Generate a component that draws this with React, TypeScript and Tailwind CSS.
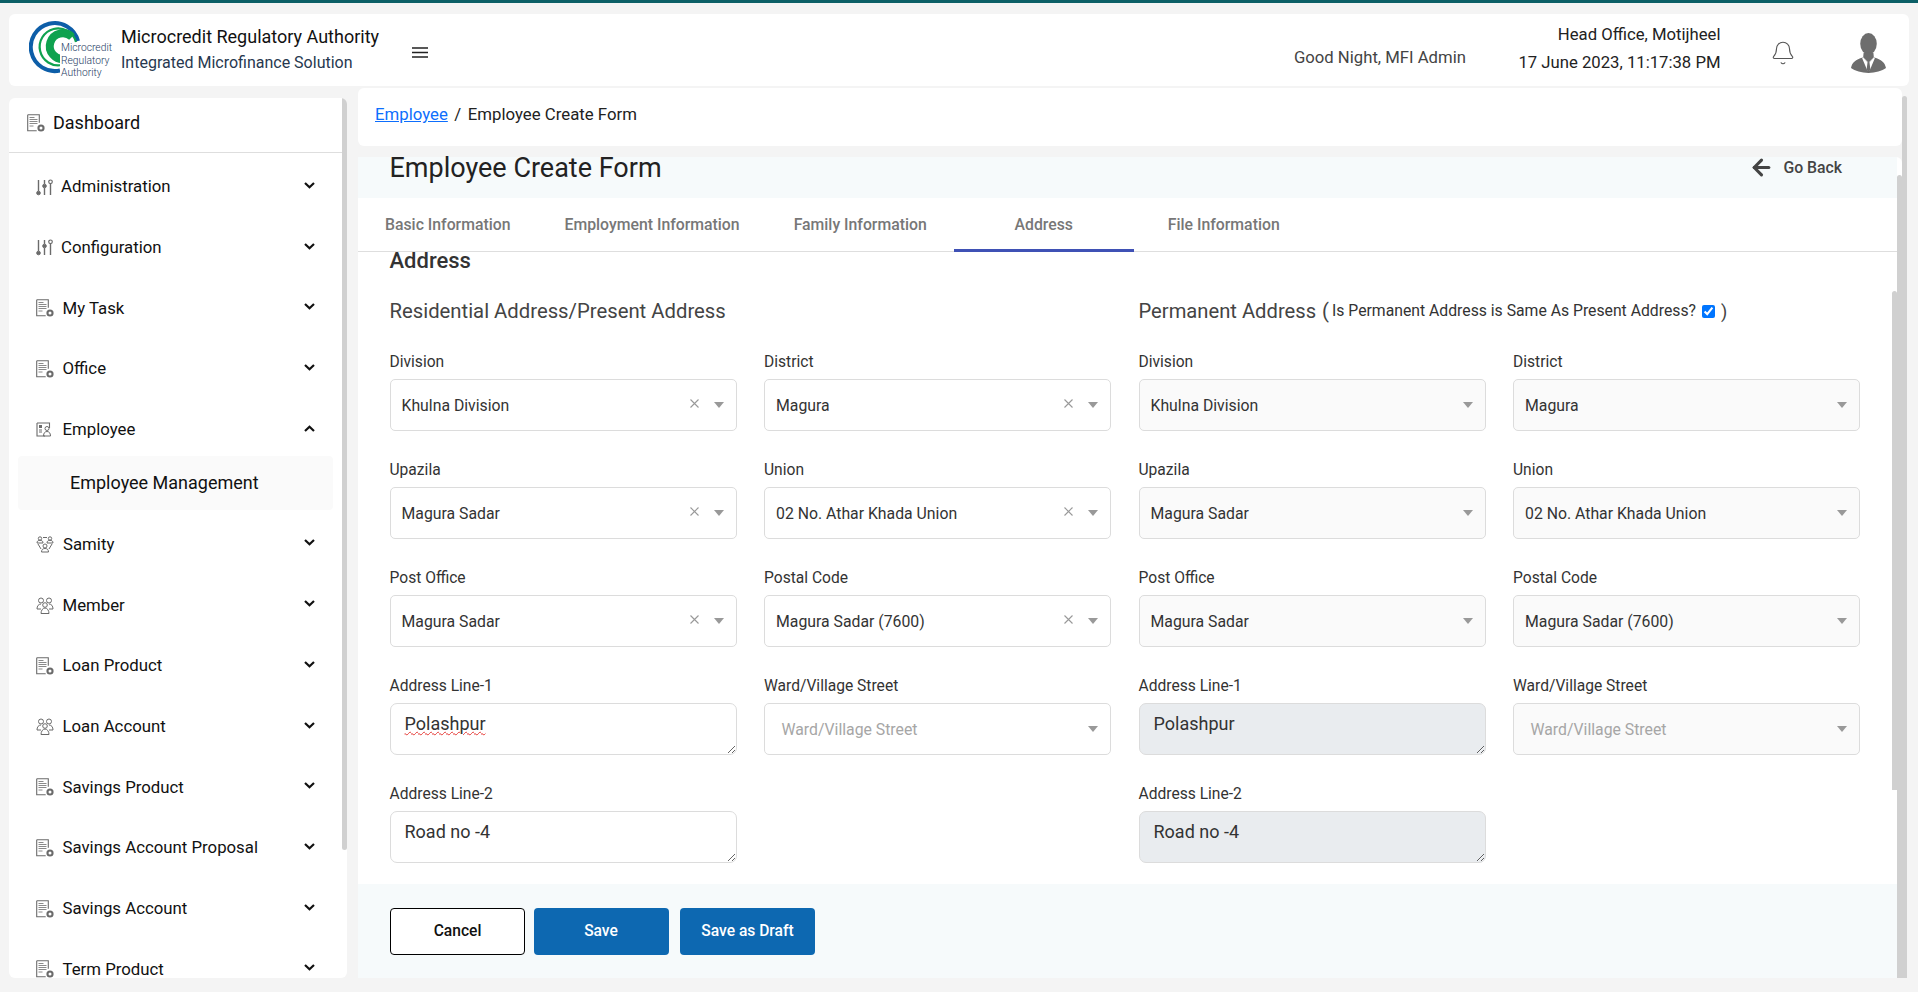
import React from "react";
import { Bell, ArrowLeft } from "lucide-react";

type IconKind = "doc" | "sliders" | "emp" | "samity" | "member";

function MenuIcon({ kind }: { kind: IconKind }) {
  const s = { stroke: "#6b6b6b", strokeWidth: 1, fill: "none" };
  if (kind === "sliders")
    return (
      <svg width="17" height="17" viewBox="0 0 17 17" {...s}>
        <path d="M2.5 1v11M8.5 1v4M8.5 9v7M14.5 5v11" strokeWidth="1.4" />
        <circle cx="2.5" cy="14" r="1.8" fill="#6b6b6b" />
        <circle cx="8.5" cy="7" r="1.8" fill="#6b6b6b" />
        <circle cx="14.5" cy="2.8" r="1.8" fill="#fff" strokeWidth="1.2" />
      </svg>
    );
  if (kind === "emp")
    return (
      <svg width="16" height="15" viewBox="0 0 16 15" {...s}>
        <path d="M1 1h12.5v5M1 1v13h8" strokeWidth="1.1" />
        <rect x="3" y="3" width="3" height="3" fill="#6b6b6b" stroke="none" />
        <path d="M3 8h3M3 10h3" />
        <circle cx="11" cy="6.5" r="2" />
        <path d="M7.5 14c0-3 1.5-4.5 3.5-4.5s3.5 1.5 3.5 4.5z" />
      </svg>
    );
  if (kind === "samity")
    return (
      <svg width="18" height="17" viewBox="0 0 18 17" {...s}>
        <circle cx="4" cy="2.5" r="1.7" />
        <circle cx="14" cy="2.5" r="1.7" />
        <circle cx="9" cy="10" r="2" />
        <path d="M1 7c0-2 1.3-2.7 3-2.7S7 5 7 7zM11 7c0-2 1.3-2.7 3-2.7S17 5 17 7zM5.5 16c0-2.5 1.5-3.5 3.5-3.5s3.5 1 3.5 3.5zM7 1.5h4M2 8l3 5M16 8l-3 5" />
      </svg>
    );
  if (kind === "member")
    return (
      <svg width="18" height="17" viewBox="0 0 18 17" {...s}>
        <circle cx="5" cy="3.5" r="2.5" />
        <circle cx="13" cy="3.5" r="2.5" />
        <circle cx="9" cy="8" r="2.3" />
        <path d="M1 12c0-3 1.5-5 4-5M17 12c0-3-1.5-5-4-5M1 12h4M13 12h4M5 16.5c0-3 1.7-5.5 4-5.5s4 2.500 4 5.500z" />
      </svg>
    );
  return (
    <svg width="18" height="18" viewBox="0 0 18 18" {...s}>
      <path d="M.7.7h11.6v8M.7.7v16h9" strokeWidth="1.1" />
      <path d="M2.500 3.500h5M2.500 5.500h8M2.500 7.500h8M2.500 9.500h8M2.500 12h4" stroke="#8a8a8a" />
      <circle cx="14" cy="14" r="3.600" fill="#6b6b6b" stroke="none" />
      <circle cx="14" cy="14" r="1.500" fill="#fff" stroke="none" />
    </svg>
  );
}

function Chevron({ up }: { up?: boolean }) {
  return (
    <svg className="-mt-[3px]" width="11" height="7" viewBox="0 0 11 7" fill="none" stroke="#111" strokeWidth="2.2">
      <path d={up ? "M1 6l4.500-4.300L10 6" : "M1 1l4.500 4.300L10 1"} />
    </svg>
  );
}

function Caret() {
  return (
    <svg width="10" height="6" viewBox="0 0 10 6" fill="#999">
      <path d="M0 0h10L5 6z" />
    </svg>
  );
}

function Clear() {
  return (
    <svg width="9" height="9" viewBox="0 0 9 9" fill="none" stroke="#999" strokeWidth="1.1">
      <path d="M.5.5l8 8M8.500.5l-8 8" />
    </svg>
  );
}

function Logo() {
  return (
    <div className="relative w-[82px] h-[58px] shrink-0">
      <svg width="82" height="58" viewBox="0 0 82 58" fill="none">
        <path d="M49 20A24 24 0 1 0 31 49.500" stroke="#0d5ea8" strokeWidth="4" />
        <path d="M47 21A18.500 18.500 0 1 0 33 44" stroke="#0fa24f" strokeWidth="2.200" />
        <path d="M43 16A13 13 0 1 0 36 38" stroke="#0fa24f" strokeWidth="8" />
        <rect x="31" y="23" width="51" height="35" fill="#fff" />
      </svg>
      <div className="absolute left-[32px] top-[21px] text-[10.300px] leading-[12.600px] font-light text-[#1d3b63]">
        <div>Microcredit</div>
        <div>Regulatory</div>
        <div>Authority</div>
      </div>
    </div>
  );
}

function Avatar() {
  return (
    <svg width="35" height="40" viewBox="0 0 36 41">
      <ellipse cx="18" cy="11" rx="8.500" ry="11" fill="#6d6d6d" />
      <path d="M13 20h10l.5 5-5.500 5-5.500-5z" fill="#6d6d6d" />
      <path d="M0 36c1-6 5-9 12-11l6 5 6-5c7 2 11 5 12 11-4 3-11 5-18 5S4 39 0 36z" fill="#6d6d6d" />
      <path d="M12.500 25l5.500 6 5.500-6 1 1-5.500 13h-2L11.500 26z" fill="#fff" />
      <path d="M17 30h2l1 8-2 2-2-2z" fill="#6d6d6d" />
    </svg>
  );
}

const menu: { name: string; icon: IconKind; open?: boolean }[] = [
  { name: "Administration", icon: "sliders" },
  { name: "Configuration", icon: "sliders" },
  { name: "My Task", icon: "doc" },
  { name: "Office", icon: "doc" },
  { name: "Employee", icon: "emp", open: true },
  { name: "Samity", icon: "samity" },
  { name: "Member", icon: "member" },
  { name: "Loan Product", icon: "doc" },
  { name: "Loan Account", icon: "member" },
  { name: "Savings Product", icon: "doc" },
  { name: "Savings Account Proposal", icon: "doc" },
  { name: "Savings Account", icon: "doc" },
  { name: "Term Product", icon: "doc" },
];

function iconSlot(kind: IconKind) {
  if (kind === "sliders") return "w-[25px] flex items-center shrink-0";
  if (kind === "samity") return "w-[27px] flex items-center shrink-0";
  return "w-[26.500px] flex items-center shrink-0";
}

function Sidebar() {
  return (
    <aside className="relative w-[338px] h-[880px] mt-[10px] bg-white rounded-[6px] overflow-hidden shrink-0">
      <div className="absolute right-0 top-0 w-[5px] h-[752px] bg-[#d0d0d0] rounded-b-[3px]" />
      <div className="h-[55px] border-b border-[#dedede] flex items-center pl-[18px] pr-[5px] pb-[5px] gap-[8px] text-[18px] text-[#111]">
        <MenuIcon kind="doc" />
        <span>Dashboard</span>
      </div>
      <div className="mt-[7.500px] ml-[9px] w-[315px] flex flex-col gap-[7.700px]">
        {menu.map((m) => (
          <React.Fragment key={m.name}>
            <div className="h-[53px] flex items-center pl-[18px] pr-[18px] text-[16.800px] text-[#111]">
              <span className={iconSlot(m.icon)}>
                <MenuIcon kind={m.icon} />
              </span>
              <span className="flex-1">{m.name}</span>
              <Chevron up={m.open} />
            </div>
            {m.open && (
              <div className="h-[54px] -mt-[7.700px] pb-[2px] bg-[#fafafa] rounded-[4px] flex items-center pl-[52px] text-[18px] text-[#111]">
                Employee Management
              </div>
            )}
          </React.Fragment>
        ))}
      </div>
    </aside>
  );
}

function Field({ label, children }: { label: string; children: React.ReactNode }) {
  return (
    <div className="flex flex-col">
      <label className="h-[24px] leading-[24px] mb-[5px] text-[15.600px] text-[#333]">{label}</label>
      {children}
    </div>
  );
}

function Select({ value, placeholder, disabled }: { value?: string; placeholder?: string; disabled?: boolean }) {
  return (
    <div
      className={
        disabled
          ? "h-[52px] border border-[#dcdcdc] rounded-[5px] bg-[#fafafa] flex items-center pl-[11px] pr-[12px] text-[15.800px] text-[#333]"
          : "h-[52px] border border-[#dcdcdc] rounded-[5px] bg-white flex items-center pl-[11px] pr-[12px] text-[15.800px] text-[#333]"
      }
    >
      {placeholder ? (
        <span className="flex-1 pl-[5.500px] pt-[1px] text-[#a6a6a6]">{placeholder}</span>
      ) : (
        <span className="flex-1 pt-[1px]">{value}</span>
      )}
      {!disabled && !placeholder && (
        <span className="mr-[15px] -mt-[4px] flex">
          <Clear />
        </span>
      )}
      <Caret />
    </div>
  );
}

function Area({ value, disabled, wavy }: { value: string; disabled?: boolean; wavy?: boolean }) {
  return (
    <textarea
      readOnly
      spellCheck={false}
      value={value}
      className={
        disabled
          ? "block w-full h-[52px] border border-[#dcdcdc] rounded-[7px] bg-[#e9ecef] pl-[14px] pt-[7px] text-[18px] leading-[26px] text-[#333] outline-none"
          : wavy
          ? "block w-full h-[52px] border border-[#dcdcdc] rounded-[7px] bg-white pl-[14px] pt-[7px] text-[18px] leading-[26px] text-[#333] outline-none underline decoration-wavy decoration-[#e53935] decoration-1"
          : "block w-full h-[52px] border border-[#dcdcdc] rounded-[7px] bg-white pl-[14px] pt-[7px] text-[18px] leading-[26px] text-[#333] outline-none"
      }
    />
  );
}

const tabs = [
  { t: "Basic Information", active: false },
  { t: "Employment Information", active: false },
  { t: "Family Information", active: false },
  { t: "Address", active: true },
  { t: "File Information", active: false },
];

export default function App() {
  return (
    <div className="w-full h-[992px] overflow-hidden bg-[#f4f4f4] border-t-[3px] border-[#0b5f66] flex flex-col font-['Roboto',sans-serif]">
      <header className="mx-[9px] mt-[11px] h-[72px] shrink-0 bg-white rounded-[6px] flex items-center pl-[20px]">
        <Logo />
        <div className="ml-[10px] flex flex-col">
          <div className="text-[18px] leading-[26px] text-[#111]">Microcredit Regulatory Authority</div>
          <div className="text-[16px] leading-[26px] text-[#27384f]">Integrated Microfinance Solution</div>
        </div>
        <svg className="ml-[33px] mt-[5px]" width="16" height="11" viewBox="0 0 16 11" stroke="#222" strokeWidth="1.700">
          <path d="M0 1h16M0 5.500h16M0 10h16" />
        </svg>
        <div className="flex-1" />
        <div className="text-[16.700px] text-[#444] mt-[16px] mr-[52.500px]">Good Night, MFI Admin</div>
        <div className="flex flex-col items-end text-[16.700px] leading-[28px] text-[#222] mr-[49.500px] mt-[-2px]">
          <div>Head Office, Motijheel</div>
          <div>17 June 2023, 11:17:38 PM</div>
        </div>
        <Bell size={26} strokeWidth={1} color="#555" className="mr-[55px] mt-[6px]" />
        <div className="mr-[23px] mt-[6px]">
          <Avatar />
        </div>
      </header>

      <div className="flex flex-1 mx-[9px] min-h-0 mt-[2px]">
        <Sidebar />
        <main className="relative ml-[11px] w-[1549px] pr-[5px] flex flex-col h-[890px] shrink-0">
          <div className="absolute right-0 top-[8px] bottom-0 w-[5px] bg-[#d0d0d0] rounded-t-[3px]" />
          <div className="h-[58px] shrink-0 bg-white rounded-[6px] flex items-center pl-[17px] text-[16.800px] text-[#222] pb-[4px]">
            <a className="text-[#0d6efd] underline">Employee</a>
            <span className="mx-[6.500px]">/</span>
            <span>Employee Create Form</span>
          </div>
          <section className="relative mt-[11px] flex-1 min-h-0 bg-white rounded-t-[6px] pr-[5px] flex flex-col">
            <div className="absolute right-0 top-[18px] bottom-0 w-[5px] bg-[#d0d0d0] rounded-t-[3px]" />
            <div className="h-[41px] shrink-0 bg-[#f6fafb] flex pl-[31.500px] pr-[55px] justify-between">
              <div className="text-[27px] leading-[22px] text-[#222]">Employee Create Form</div>
              <div className="flex items-center h-[22px] text-[15.800px] font-medium text-[#444]">
                <ArrowLeft size={25} strokeWidth={3} className="mr-[9px] -mt-[2px]" />
                Go Back
              </div>
            </div>
            <div className="h-[54px] shrink-0 border-b border-[#dedede] flex">
              {tabs.map((x) => (
                <div
                  key={x.t}
                  className={
                    x.active
                      ? "min-w-[180px] px-[27px] flex items-center justify-center text-[15.800px] font-medium text-[#777] border-b-[3px] -mb-px border-[#3f51b5] pt-[2px]"
                      : x.t === "File Information"
                      ? "min-w-[180px] px-[27px] flex items-center justify-center text-[15.800px] font-medium text-[#777]"
                      : "min-w-[100px] px-[27px] flex items-center justify-center text-[15.800px] font-medium text-[#777]"
                  }
                >
                  {x.t}
                </div>
              ))}
            </div>
            <div className="relative flex-1 min-h-0 overflow-hidden">
              <div className="absolute right-0 top-[39px] bottom-[94px] w-[5px] bg-[#d0d0d0] rounded-t-[3px]" />
              <div className="pl-[31.500px]">
                <h2 className="h-[19px] text-[22px] leading-[18px] font-medium text-[#333]">Address</h2>
                <div className="grid grid-cols-[347px_347px_347px_347px] gap-x-[27.500px] gap-y-[27px]">
                  <div className="col-span-2 h-[30px] leading-[30px] mt-[25px] mb-[-3px] text-[20.300px] text-[#444]">
                    Residential Address/Present Address
                  </div>
                  <div className="col-span-2 h-[30px] flex items-center mt-[25px] mb-[-3px] text-[20.200px] text-[#444]">
                    <span>Permanent Address</span>
                    <span className="ml-[6px]">(</span>
                    <span className="ml-[3px] text-[15.750px] text-[#333]">Is Permanent Address is Same As Present Address?</span>
                    <input type="checkbox" checked readOnly className="w-[13px] h-[13px] ml-[6px]" />
                    <span className="ml-[6px] text-[18px]">)</span>
                  </div>

                  <Field label="Division"><Select value="Khulna Division" /></Field>
                  <Field label="District"><Select value="Magura" /></Field>
                  <Field label="Division"><Select value="Khulna Division" disabled /></Field>
                  <Field label="District"><Select value="Magura" disabled /></Field>

                  <Field label="Upazila"><Select value="Magura Sadar" /></Field>
                  <Field label="Union"><Select value="02 No. Athar Khada Union" /></Field>
                  <Field label="Upazila"><Select value="Magura Sadar" disabled /></Field>
                  <Field label="Union"><Select value="02 No. Athar Khada Union" disabled /></Field>

                  <Field label="Post Office"><Select value="Magura Sadar" /></Field>
                  <Field label="Postal Code"><Select value="Magura Sadar (7600)" /></Field>
                  <Field label="Post Office"><Select value="Magura Sadar" disabled /></Field>
                  <Field label="Postal Code"><Select value="Magura Sadar (7600)" disabled /></Field>

                  <Field label="Address Line-1"><Area value="Polashpur" wavy /></Field>
                  <Field label="Ward/Village Street"><Select placeholder="Ward/Village Street" /></Field>
                  <Field label="Address Line-1"><Area value="Polashpur" disabled /></Field>
                  <Field label="Ward/Village Street"><Select placeholder="Ward/Village Street" disabled /></Field>

                  <Field label="Address Line-2"><Area value="Road no -4" /></Field>
                  <div />
                  <Field label="Address Line-2"><Area value="Road no -4" disabled /></Field>
                  <div />
                </div>
              </div>
            </div>
            <div className="h-[94px] shrink-0 bg-[#f6fafb] flex items-start pl-[32px] pt-[24px] gap-[8.500px] text-[15.600px] font-medium">
              <button className="w-[135px] h-[47px] border border-black rounded-[4px] bg-white text-[#111]">Cancel</button>
              <button className="w-[135px] h-[47px] rounded-[4px] bg-[#0d68b1] text-white">Save</button>
              <button className="ml-[3px] w-[135px] h-[47px] rounded-[4px] bg-[#0d68b1] text-white">Save as Draft</button>
            </div>
          </section>
        </main>
      </div>
    </div>
  );
}
